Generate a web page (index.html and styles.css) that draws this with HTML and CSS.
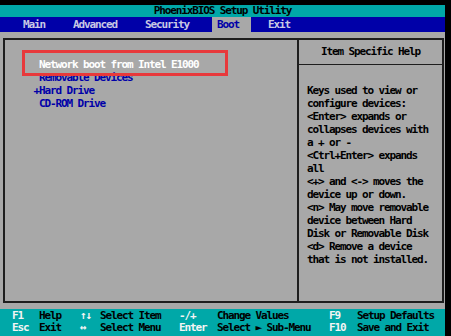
FILE: index.html
```html
<!DOCTYPE html>
<html>
<head>
<meta charset="utf-8">
<title>PhoenixBIOS Setup Utility</title>
<link rel="stylesheet" href="styles.css">
</head>
<body>
<div class="screen">
  <div class="title">PhoenixBIOS Setup Utility</div>
  <nav class="tabs">
    <span class="tab">Main</span>
    <span class="tab">Advanced</span>
    <span class="tab">Security</span>
    <span class="tab active">Boot</span>
    <span class="tab">Exit</span>
  </nav>
  <main class="frame">
    <section class="list">
      <div class="item current">Network boot from Intel E1000</div>
      <div class="item">Removable Devices</div>
      <div class="item exp">+Hard Drive</div>
      <div class="item">CD-ROM Drive</div>
      <div class="mark"></div>
    </section>
    <aside class="help">
      <div class="help-title">Item Specific Help</div>
      <div class="help-body">
        <div>Keys used to view or</div>
        <div>configure devices:</div>
        <div>&lt;Enter&gt; expands or</div>
        <div>collapses devices with</div>
        <div>a + or -</div>
        <div>&lt;Ctrl+Enter&gt; expands</div>
        <div>all</div>
        <div>&lt;+&gt; and &lt;-&gt; moves the</div>
        <div>device up or down.</div>
        <div>&lt;n&gt; May move removable</div>
        <div>device between Hard</div>
        <div>Disk or Removable Disk</div>
        <div>&lt;d&gt; Remove a device</div>
        <div>that is not installed.</div>
      </div>
    </aside>
  </main>
  <footer class="keys">
    <span class="k">F1</span><span class="d">Help</span>
    <span class="k">↑↓</span><span class="d">Select Item</span>
    <span class="k">-/+</span><span class="d">Change Values</span>
    <span class="k">F9</span><span class="d">Setup Defaults</span>
    <span class="k">Esc</span><span class="d">Exit</span>
    <span class="k">↔</span><span class="d">Select Menu</span>
    <span class="k">Enter</span><span class="d">Select ► Sub-Menu</span>
    <span class="k">F10</span><span class="d">Save and Exit</span>
  </footer>
</div>
</body>
</html>
```
FILE: styles.css
```css
html, body {
  margin: 0;
  padding: 0;
}
body {
  background: #000;
  width: 451px;
  height: 336px;
  overflow: hidden;
  font-family: "DejaVu Sans Mono", "Liberation Mono", monospace;
  font-size: 11px;
  font-weight: bold;
  letter-spacing: -1.12px;
}
.screen {
  width: 445px;
  height: 331px;
  margin-top: 5px;
  background: #a8a8a8;
  display: flex;
  flex-direction: column;
}
.title {
  height: 12px;
  line-height: 12px;
  background: #00a8a8;
  color: #000;
  text-align: center;
}
.tabs {
  height: 15px;
  line-height: 15px;
  background: #0000a8;
  display: flex;
  gap: 18px;
  padding-left: 18px;
}
.tab {
  padding: 0 5px;
  color: #c8c8e4;
}
.tab.active {
  background: #a8a8a8;
  color: #0000a8;
  padding-right: 12px;
  margin-right: -6px;
}
.frame {
  height: 265px;
  box-sizing: border-box;
  margin: 6px 1px 0 3px;
  border: 2px solid #1e1e1e;
  display: flex;
}
.list {
  position: relative;
  width: 292px;
  box-sizing: border-box;
  padding: 18px 0 0 34px;
  color: #0000a8;
  line-height: 13px;
}
.item.current {
  color: #fff;
}
.item.exp {
  text-indent: -5.5px;
}
.mark {
  position: absolute;
  left: 17px;
  top: 10px;
  width: 206px;
  height: 26px;
  box-sizing: border-box;
  border: 3px solid #e8393c;
}
.help {
  flex: 1;
  border-left: 2px solid #1e1e1e;
  color: #000;
}
.help-title {
  height: 24px;
  line-height: 24px;
  text-align: center;
  border-bottom: 1px solid #1e1e1e;
}
.help-body {
  padding: 19px 0 0 8px;
  line-height: 13px;
}
.keys {
  margin-top: auto;
  height: 27px;
  box-sizing: border-box;
  padding: 1px 0 0 12px;
  background: #00a8a8;
  display: grid;
  grid-template-columns: 27px 41px 20px 79px 38px 112px 28px 1fr;
  grid-auto-rows: 12px;
  line-height: 12px;
  white-space: nowrap;
}
.k {
  color: #f4f4f4;
}
.d {
  color: #000;
}
```
